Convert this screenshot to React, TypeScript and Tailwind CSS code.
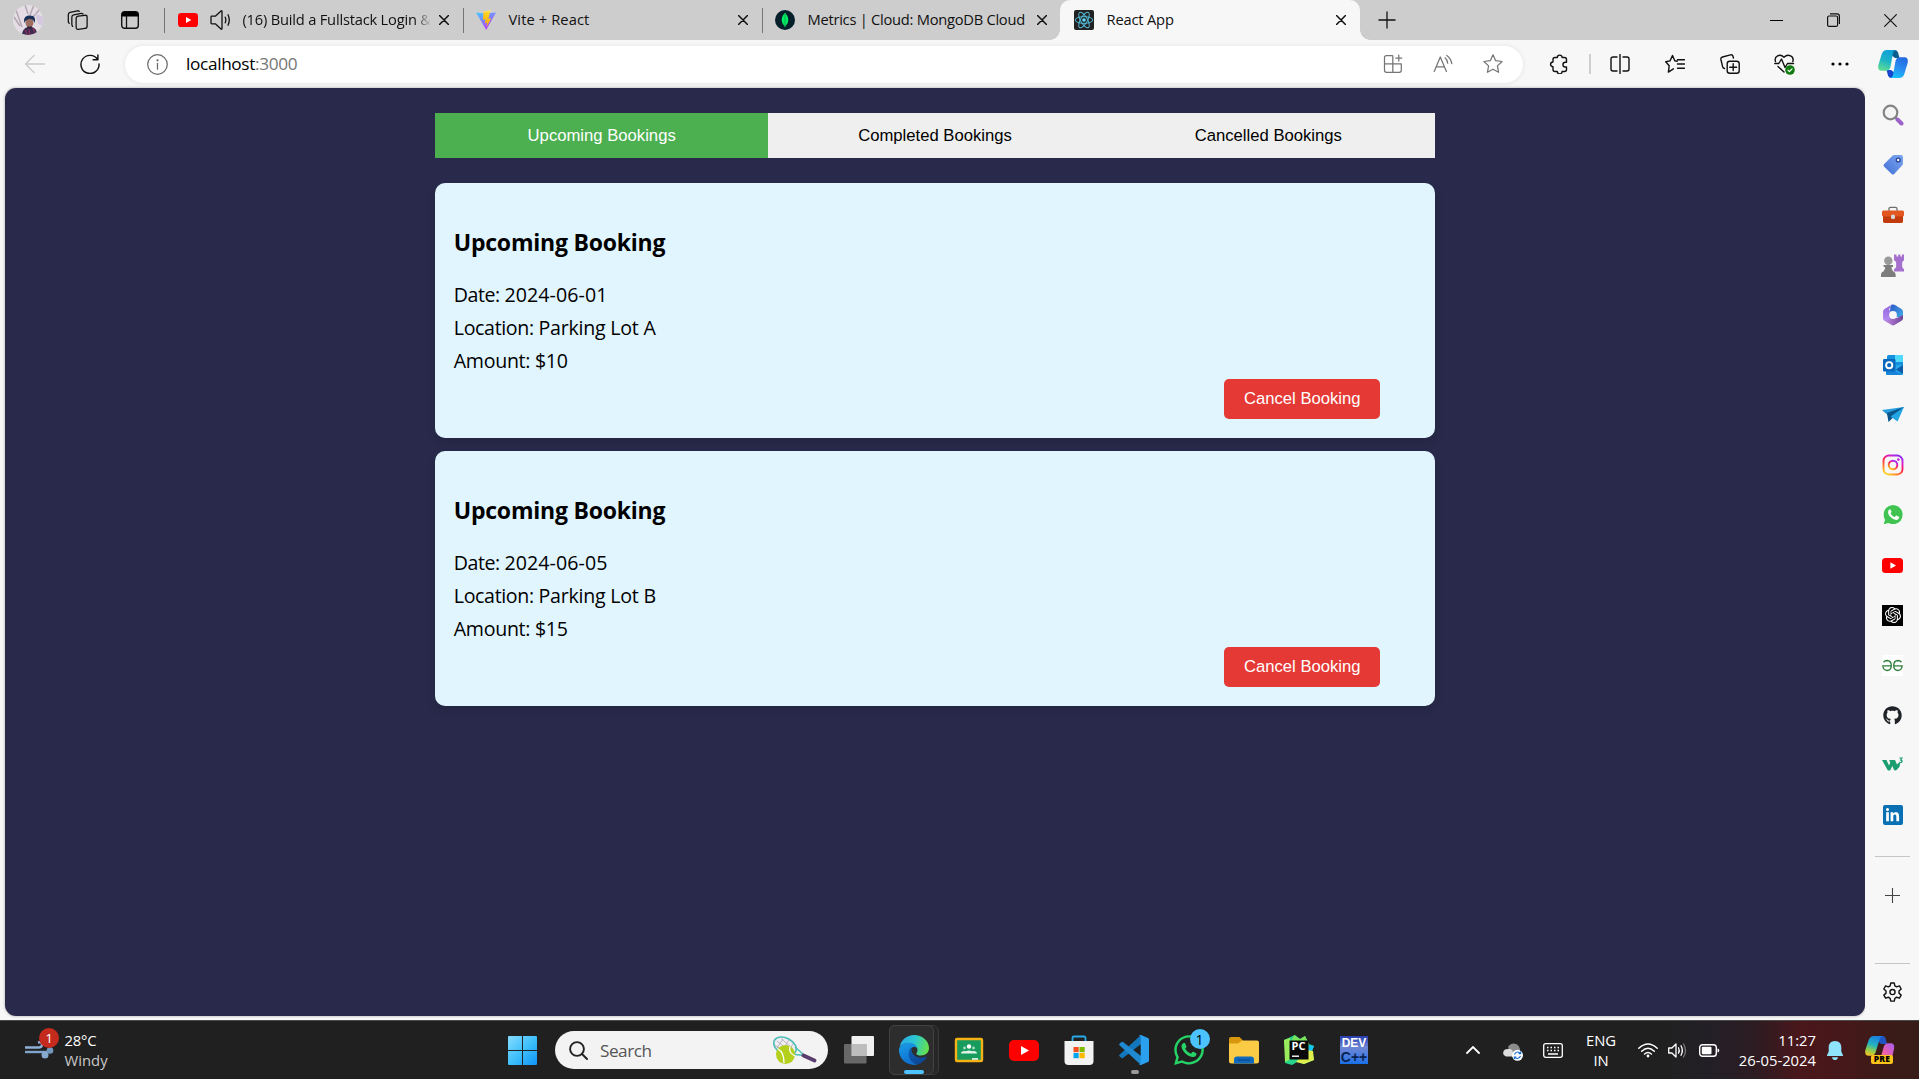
import type { ReactNode } from "react";
import { FaGithub, FaWhatsapp, FaLinkedinIn } from "react-icons/fa";
import { SiOpenai } from "react-icons/si";

/* ---------- shared pieces ---------- */

function Line({ size = 20, children, w = 1.25, color = "#111", className = "" }: { size?: number; children: ReactNode; w?: number; color?: string; className?: string }) {
  return (
    <svg width={size} height={size} viewBox="0 0 20 20" fill="none" stroke={color} strokeWidth={w} strokeLinecap="round" strokeLinejoin="round" className={className}>
      {children}
    </svg>
  );
}

function Close({ size = 10, w = 1.5 }: { size?: number; w?: number }) {
  return (
    <svg width={size} height={size} viewBox="0 0 10 10" stroke="#111" strokeWidth={w} strokeLinecap="round" className="shrink-0">
      <path d="M.5.5l9 9M9.5.5l-9 9" />
    </svg>
  );
}

function YouTube({ width, height }: { width: number; height: number }) {
  return (
    <svg width={width} height={height} viewBox="0 0 30 21" preserveAspectRatio="none" className="shrink-0">
      <rect width="30" height="21" rx="5" fill="#f00" />
      <path d="M12 6l8 4.5-8 4.5z" fill="#fff" />
    </svg>
  );
}

function Divider() {
  return <div className="h-[25px] w-px shrink-0 bg-[#757575]" />;
}

/* ---------- tab strip ---------- */

function Avatar() {
  return (
    <svg width="30" height="30" viewBox="0 0 30 30" className="shrink-0">
      <defs>
        <clipPath id="av"><circle cx="15" cy="15" r="15" /></clipPath>
      </defs>
      <g clipPath="url(#av)">
        <rect width="30" height="30" fill="#e4dde6" />
        <path d="M3 5l6 17M12 0l3 9M17 10L21 0M20 12l7-8M1 12l6 9" stroke="#b3a7b0" strokeWidth="1.5" fill="none" />
        <path d="M22 8l8 4v9l-5-2z" fill="#d3c8dd" />
        <path d="M9 30c0-4 2-7 6-8h4c3 1 5 3 5 8z" fill="#3a2b52" />
        <path d="M12 25l3 5M20 23l2 6M16 24l1 6" stroke="#8d3358" strokeWidth="1.3" />
        <ellipse cx="16.500" cy="17.500" rx="4" ry="5" fill="#9c6f62" />
        <path d="M11.500 18c-1.500-5 1-7.500 5.500-7.500s6 3 4.500 7.500c-.7-3-2-4-4.500-4s-4.500 1-5.500 4z" fill="#1c3158" />
        <path d="M14 21q2.500 1.500 5 0l-1 2.300h-3z" fill="#2b2238" />
      </g>
    </svg>
  );
}

function ViteIcon() {
  return (
    <svg width="20" height="20" viewBox="0 0 20 20" className="shrink-0">
      <defs>
        <linearGradient id="v1" x1="0" y1="0" x2=".6" y2="1"><stop stopColor="#41d1ff" /><stop offset="1" stopColor="#bd34fe" /></linearGradient>
        <linearGradient id="v2" x1="0" y1="0" x2="0" y2="1"><stop stopColor="#ffea83" /><stop offset=".2" stopColor="#ffcf20" /><stop offset="1" stopColor="#ffa800" /></linearGradient>
      </defs>
      <path d="M0 2.400l9 1.200L20 2.400 10.200 20z" fill="url(#v1)" />
      <path d="M14.700 0L7.500 1.500l-.6 8.300 2.800-.6-.9 4 2.300-.6-.6 4.600 4.700-9-2.900.6z" fill="url(#v2)" />
    </svg>
  );
}

function MongoIcon() {
  return (
    <svg width="20" height="20" viewBox="0 0 20 20" className="shrink-0">
      <circle cx="10" cy="10" r="10" fill="#06202b" />
      <path d="M10 2.800c1.200 1.600 3.300 3.600 3.300 7 0 3-1.500 4.800-2.700 5.900l-.3 1.600h-.6l-.3-1.600C8.200 14.600 6.700 12.800 6.700 9.800c0-3.400 2.100-5.400 3.300-7z" fill="#00ed64" />
      <path d="M10 4v12" stroke="#00a34a" strokeWidth=".8" />
    </svg>
  );
}

function ReactIcon() {
  return (
    <svg width="20" height="20" viewBox="0 0 20 20" className="shrink-0">
      <rect width="20" height="20" rx="2" fill="#222" />
      <g fill="none" stroke="#53bcd9" strokeWidth=".95">
        <ellipse cx="10" cy="10" rx="8.800" ry="3.400" />
        <ellipse cx="10" cy="10" rx="8.800" ry="3.400" transform="rotate(60 10 10)" />
        <ellipse cx="10" cy="10" rx="8.800" ry="3.400" transform="rotate(120 10 10)" />
      </g>
      <circle cx="10" cy="10" r="1.800" fill="#61dafb" />
    </svg>
  );
}

function TabStrip() {
  return (
    <div className="flex h-10 shrink-0 items-center bg-[#cdcdcd] text-[14.7px] text-[#111]">
      <div className="flex w-[164px] shrink-0 items-center pl-[13px]">
        <Avatar />
        <Line size={22} className="ml-[24px]" w={1.15}>
          <rect x="8.300" y="6.200" width="10" height="12" rx="2" transform="rotate(0 13 12) skewY(-8) translate(0 1.800)" />
          <path d="M5.200 15.800q-.8-.6-.8-1.600V7.600q0-1.800 1.700-2.200L13 4q1-.1 1.600.7M2 13q-.8-.6-.8-1.500V5.200q0-1.700 1.600-2.100l6.700-1.500q1-.1 1.600.5" />
        </Line>
        <svg width="18" height="18" viewBox="0 0 18 18" fill="none" className="ml-[32px]">
          <rect x=".7" y=".7" width="16.600" height="16.600" rx="2.800" stroke="#111" strokeWidth="1.400" />
          <path d="M1 5V3.500Q1 1 3.500 1h11Q17 1 17 3.500V5z" fill="#000" stroke="#000" />
          <path d="M5.500 5v12" stroke="#111" strokeWidth="1.300" />
        </svg>
      </div>
      <Divider />
      <div className="flex w-[298px] shrink-0 items-center pl-[13px]">
        <YouTube width={20} height={14} />
        <svg width="21" height="20" viewBox="0 0 21 20" fill="none" stroke="#111" strokeWidth="1.300" strokeLinecap="round" strokeLinejoin="round" className="ml-3 shrink-0">
          <path d="M1 7q0-.8.8-.8h3.500L11 1q1-.7 1 .4v17.200q0 1.100-1 .4l-5.700-5.200H1.800Q1 13.800 1 13zM15.200 7.200q1.300 2.800 0 5.600M18 4.800q2.600 5.200 0 10.400" />
        </svg>
        <div className="ml-[11.500px] w-[190px] pb-[2px] tracking-[-0.21px] whitespace-nowrap [mask-image:linear-gradient(to_right,#000_172px,transparent_188px)]">(16) Build a Fullstack Login &amp;</div>
        <div className="ml-[6.500px]"><Close /></div>
      </div>
      <Divider />
      <div className="flex w-[298px] shrink-0 items-center pl-[12px]">
        <ViteIcon />
        <div className="ml-[12.500px] w-[229.500px] pb-[2px] tracking-[0.1px]">Vite + React</div>
        <Close />
      </div>
      <Divider />
      <div className="flex w-[297px] shrink-0 items-center pl-[12px]">
        <MongoIcon />
        <div className="ml-[12.500px] w-[229.500px] pb-[2px] tracking-[-0.26px] whitespace-nowrap">Metrics | Cloud: MongoDB Cloud</div>
        <Close />
      </div>
      <div className="relative flex h-10 w-[300px] shrink-0 items-center rounded-t-[10px] bg-[#f7f7f7] pl-[14px]">
        <div className="absolute bottom-0 -left-[10px] size-[10px] bg-[radial-gradient(circle_at_0_0,#cdcdcd_9.5px,#f7f7f7_10px)]" />
        <div className="absolute -right-[10px] bottom-0 size-[10px] bg-[radial-gradient(circle_at_100%_0,#cdcdcd_9.5px,#f7f7f7_10px)]" />
        <ReactIcon />
        <div className="ml-[12.500px] w-[229.500px] pb-[2px] tracking-[-0.18px]">React App</div>
        <Close />
      </div>
      <svg width="18" height="18" viewBox="0 0 18 18" stroke="#111" strokeWidth="1.300" className="ml-[18px] shrink-0"><path d="M9 .5v17M.5 9h17" /></svg>
      <div className="ml-auto flex">
        <div className="flex w-[57px] items-center justify-center"><div className="h-px w-[13px] bg-black" /></div>
        <div className="flex w-[57px] items-center justify-center">
          <svg width="13" height="14" viewBox="0 0 13 14" fill="none" stroke="#111" strokeWidth="1.200">
            <rect x=".6" y="3" width="10" height="10.400" rx="1.500" />
            <path d="M3 .8h7q2.400 0 2.400 2.400V11" />
          </svg>
        </div>
        <div className="flex w-[57px] items-center justify-center"><Close size={13} w={0.9} /></div>
      </div>
    </div>
  );
}

/* ---------- toolbar ---------- */

function CopilotLogo() {
  return (
    <svg width="30" height="28" viewBox="0 0 30 28">
      <defs>
        <linearGradient id="c1" x1=".6" y1="0" x2=".3" y2="1"><stop stopColor="#0f9fd8" /><stop offset=".5" stopColor="#1cb4c8" /><stop offset="1" stopColor="#5fdc92" /></linearGradient>
        <linearGradient id="c2" x1=".7" y1="0" x2=".3" y2="1"><stop stopColor="#2468e0" /><stop offset=".5" stopColor="#2a8cf0" /><stop offset="1" stopColor="#18c0fa" /></linearGradient>
      </defs>
      <path d="M13 0h4q2.300.2 3 2.600L21.500 8H17l-4-3z" fill="#0a5d8c" />
      <path d="M17 28h-4q-2.300-.2-3-2.600L8.500 20H13l4 3z" fill="#1446d0" />
      <path d="M9 0h8.500q-2 .5-2.500 3l-2.500 14q-.8 3.500-4.300 3.700H3.500C.5 20.700-.3 18 .4 15L3.600 4.300Q5 0 9 0z" fill="url(#c1)" />
      <path d="M21 28h-8.500q2-.5 2.500-3l2.500-14q.8-3.500 4.300-3.700h4.700c3 0 3.800 2.700 3.100 5.700l-3.200 10.700Q25 28 21 28z" fill="url(#c2)" />
    </svg>
  );
}

function Cell({ children }: { children: ReactNode }) {
  return <div className="flex w-[55px] shrink-0 items-center justify-center">{children}</div>;
}

const STAR = "M10 .8l2.700 5.900 6.400.8-4.700 4.400 1.200 6.400L10 15.200l-5.600 3.100 1.200-6.400L.9 7.500l6.400-.8z";

function Toolbar() {
  return (
    <div className="flex h-12 shrink-0 items-center bg-[#f7f7f7]">
      <div className="flex w-[125px] shrink-0 items-center pl-[25px]">
        <Line color="#cbcbcb" w={1.3}><path d="M.5 10h19M9 1.500L.5 10 9 18.500" /></Line>
        <svg width="20" height="20" viewBox="0 0 21 21" fill="none" stroke="#111" strokeWidth="1.500" strokeLinecap="round" strokeLinejoin="round" className="ml-[35px]">
          <path d="M18.500 5.800A9.500 9.500 0 1 0 20 10.500M18.800 1v5h-5" />
        </svg>
      </div>
      <div className="flex h-[37px] w-[1398px] shrink-0 items-center rounded-full bg-white pr-[5.500px] pl-[22px] shadow-[0_0_5px_rgba(0,0,0,0.09)]">
        <Line color="#6b6b6b" w={1.2} size={21}>
          <circle cx="10" cy="10" r="9.300" />
          <path d="M10 9v5.500" />
          <circle cx="10" cy="6" r=".5" fill="#6b6b6b" />
        </Line>
        <div className="ml-[18px] flex pb-px text-[17.2px] tracking-[-0.33px] text-black">
          localhost<span className="text-[#767676]">:3000</span>
        </div>
        <div className="ml-auto flex [&>*]:w-[50px]">
          <div className="flex justify-center">
            <Line color="#757575">
              <path d="M9.500 1.500h-6Q1.500 1.500 1.500 3.500v12.800q0 2 2 2h12.800q2 0 2-2v-6.500H1.500M9.800 1.800v16.500M15.800 1v6M12.800 4h6" />
            </Line>
          </div>
          <div className="flex justify-center">
            <Line color="#757575">
              <path d="M1.200 17.500L7.300 3 13.400 17.500M3.200 12.800h8.200M12 3.800q2.400 2 2.700 5.400M13.800 1.500q4.200 3 5 8.200" />
            </Line>
          </div>
          <div className="flex justify-center"><Line color="#757575"><path d={STAR} /></Line></div>
        </div>
      </div>
      <div className="ml-2 flex shrink-0 items-center">
        <Cell>
          <Line w={1.4}>
            <path d="M4 5.500q0-2 2-2h2.300a2.400 2.400 0 0 1 4.800 0h2.400q2 0 2 2v2.800h-1.200a2.300 2.300 0 0 0 0 4.700h1.200v2.500q0 2-2 2h-2.400a2.400 2.400 0 0 1-4.800 0H6q-2 0-2-2v-2.700a2.400 2.400 0 0 1 0-4.800z" />
          </Line>
        </Cell>
        <div className="ml-[3px] h-5 w-[2px] bg-[#cfcfcf]" />
        <div className="flex pl-px">
          <Cell>
            <Line w={1.4}>
              <path d="M7 3H3Q1 3 1 5v10q0 2 2 2h4M13 3h4q2 0 2 2v10q0 2-2 2h-4M10 .5v19" />
            </Line>
          </Cell>
          <Cell>
            <Line w={1.4}>
              <path d="M12.200 7.200L9.800 6.800 7.500 1.500 5 6.900l-4.300.8 3.500 4-.8 6.400 5-3.300M12.500 5.800h7M12.500 10h7M12.500 14.200h7" />
            </Line>
          </Cell>
          <Cell>
            <Line w={1.4}>
              <rect x="7.200" y="7.200" width="12" height="12" rx="2.500" />
              <path d="M13.200 9.800v6.800M9.800 13.200h6.800M4.500 14.500Q3 14.200 2.600 12.700L.9 5.500q-.4-2 1.500-2.500L10.500.9q2-.4 2.500 1.400l.4 1.700" />
            </Line>
          </Cell>
          <Cell>
            <svg width="21" height="22" viewBox="0 0 21 22" fill="none" stroke="#111" strokeWidth="1.400" strokeLinecap="round" strokeLinejoin="round">
              <path d="M1.500 8.500C-.2 3 6 .2 10 4.200 14 .2 20.500 3 18.800 8.500M.8 10.500h4L7.500 6l3.500 8.500 2.500-4h6M4 13.500l6 5.500" />
              <circle cx="16" cy="17" r="4.800" fill="#107c10" stroke="none" />
              <path d="M14 17.200l1.400 1.400 2.600-2.800" stroke="#fff" strokeWidth="1.200" />
            </svg>
          </Cell>
          <Cell>
            <svg width="18" height="4" viewBox="0 0 18 4"><circle cx="2" cy="2" r="1.600" /><circle cx="9" cy="2" r="1.600" /><circle cx="16" cy="2" r="1.600" /></svg>
          </Cell>
          <div className="flex w-[51px] items-center justify-center"><CopilotLogo /></div>
        </div>
      </div>
    </div>
  );
}

/* ---------- page ---------- */

const bookings = [
  { date: "2024-06-01", location: "Parking Lot A", amount: "$10" },
  { date: "2024-06-05", location: "Parking Lot B", amount: "$15" },
];

function BookingsPage() {
  return (
    <main className="flex flex-1 flex-col items-center rounded-[11px] bg-[#29294b] pt-[25px] shadow-[0_0_3px_rgba(0,0,0,0.35)]">
      <div className="flex w-[1000px] flex-col">
        <div className="grid h-[45px] grid-cols-3 font-['Liberation_Sans',Arial,sans-serif] text-[16.67px] text-black">
          <button className="bg-[#4caf50] text-white">Upcoming Bookings</button>
          <button className="bg-[#efefef]">Completed Bookings</button>
          <button className="bg-[#efefef]">Cancelled Bookings</button>
        </div>
        <div className="mt-[25px] flex flex-col gap-[13px]">
          {bookings.map((b) => (
            <section key={b.date} className="flex h-[255px] flex-col rounded-[10px] bg-[#e1f5fe] px-[18.75px] pt-[42px] text-black shadow-[0_5px_10px_rgba(0,0,0,0.12)]">
              <h3 className="mb-[19px] text-[23px] leading-[34px] font-bold tracking-[-0.22px]">Upcoming Booking</h3>
              <p className="text-[19.6px] leading-[33.2px] tracking-[0.1px]"><span className="tracking-[-0.45px]">Date: </span>{b.date}</p>
              <p className="text-[19.6px] leading-[33.2px] tracking-[-0.24px]"><span className="tracking-[-0.35px]">Location: </span>{b.location}</p>
              <p className="text-[19.6px] leading-[33.2px] tracking-[-0.3px]">Amount: {b.amount}</p>
              <button className="mt-auto mr-[36px] mb-[19px] h-10 w-[156px] shrink-0 self-end rounded-[5px] bg-[#e53935] pb-px font-['Liberation_Sans',Arial,sans-serif] text-[16.67px] text-white">
                Cancel Booking
              </button>
            </section>
          ))}
        </div>
      </div>
    </main>
  );
}

/* ---------- edge sidebar ---------- */

const S = ({ children, size = 22 }: { children: ReactNode; size?: number }) => (
  <svg width={size} height={size} viewBox="0 0 22 22">{children}</svg>
);

const sidebarIcons: ReactNode[] = [
  <S>
    <circle cx="8.500" cy="8.500" r="6.800" fill="#f4f4f4" stroke="#848484" strokeWidth="2.200" />
    <path d="M13.500 13.500l2 2" stroke="#777" strokeWidth="2" />
    <path d="M15.500 15.500l4 4" stroke="#9b63c9" strokeWidth="4" strokeLinecap="round" />
  </S>,
  <S>
    <defs><linearGradient id="tg" x1="1" y1="0" x2="0" y2="1"><stop stopColor="#7fa6ee" /><stop offset="1" stopColor="#4070d8" /></linearGradient></defs>
    <path d="M12.500 1h6.500q2 0 2 2v6.500q0 1-.8 1.800l-8 8.700q-1.200 1.200-2.500 0l-7.500-7.300q-1.500-1.400 0-2.800l8-8Q11.300 1 12.500 1z" fill="url(#tg)" />
    <circle cx="16.200" cy="6" r="1.900" fill="#fff" stroke="#23459b" strokeWidth="1.400" />
  </S>,
  <S>
    <path d="M7 7V4.800Q7 3.300 8.500 3.300h5q1.500 0 1.500 1.500V7" fill="none" stroke="#6f6f6f" strokeWidth="1.300" />
    <rect x="1" y="10" width="20" height="9" rx="1.800" fill="#c23b0c" />
    <rect x="0" y="6.500" width="22" height="6" rx="1.500" fill="#e2571f" />
    <rect x="9" y="10.500" width="4" height="4.500" rx="1.500" fill="#d5d5d5" />
  </S>,
  <S size={23}>
    <path d="M12.500.5h2.300v2h1.700v-2h2v2H20v-2h2V6l-1.700 1.700v5l1.700 2v2h-9.500v-2l2-2v-5L12.500 6z" fill="#a56fcd" />
    <circle cx="7" cy="6.500" r="4" fill="#9a9a9a" />
    <path d="M2.500 10.500h9v2H10q0 2.500 1.500 4 2.500.8 2.500 3V22H0v-2.500q0-2.200 2.500-3Q4 15 4 12.500H2.500z" fill="#7d7d7d" />
  </S>,
  <S>
    <defs>
      <linearGradient id="m1" x1=".5" y1="0" x2=".3" y2="1"><stop stopColor="#8d63e0" /><stop offset="1" stopColor="#b990f0" /></linearGradient>
      <linearGradient id="m2" x1="0" y1="0" x2="1" y2="1"><stop stopColor="#2c55c4" /><stop offset="1" stopColor="#45b4ee" /></linearGradient>
      <linearGradient id="m3" x1="0" y1="0" x2="1" y2="0"><stop stopColor="#c78be6" /><stop offset="1" stopColor="#6d4599" /></linearGradient>
    </defs>
    <path d="M10.500.3L2.500 5Q1 6 1 7.500v7q0 1.500 1.500 2.300l4 2.200 4.500-8L7 5.500Q7.500 2 10.500.3z" fill="url(#m1)" />
    <path d="M9.500.8q1.500-.8 3 0L19.500 5Q21 6 21 7.500V15l-6-2-4-2-3-4Q7.500 3 9.500.8z" fill="url(#m2)" />
    <path d="M2 16l7.500 5q1.500.9 3 0l7-4.200Q21 16 21 14.500V11l-6 3-4-2-4.500 4.500z" fill="url(#m3)" />
    <circle cx="11" cy="11" r="3.900" fill="#f7f7f7" />
  </S>,
  <S>
    <rect x="5" y="1" width="16" height="12" rx="1.500" fill="#1490df" />
    <path d="M13 1h6.500Q21 1 21 2.500V8h-8z" fill="#50d9ff" />
    <path d="M4 12l17-1v8.500q0 1.500-1.500 1.500H5.500Q4 21 4 19.500z" fill="#28a8ea" />
    <path d="M4 12l17 9H5.500Q4 21 4 19.500z" fill="#1784d9" />
    <path d="M21 11v9l-7-4.500z" fill="#0a5ba8" />
    <rect x="1" y="5" width="12.500" height="12.500" rx="1.300" fill="#0a69bd" />
    <circle cx="7.200" cy="11.200" r="3.100" fill="none" stroke="#fff" strokeWidth="1.900" />
  </S>,
  <S>
    <path d="M0 6L22 3 8 13z" fill="#2a9fe0" />
    <path d="M0 6l8 5 14-8L4 9z" fill="#0f6cab" />
    <path d="M5 9.500L22 3 6.500 18z" fill="#0a5489" />
    <path d="M8.500 12.500L22 3l-6.500 14.500z" fill="#23a5e4" />
  </S>,
  <S>
    <defs><linearGradient id="ig" x1=".2" y1="1" x2=".8" y2="0"><stop stopColor="#ffd521" /><stop offset=".3" stopColor="#ff6a2b" /><stop offset=".55" stopColor="#fb1b5e" /><stop offset=".8" stopColor="#d41fd0" /><stop offset="1" stopColor="#8a2cf5" /></linearGradient></defs>
    <g fill="none" stroke="url(#ig)" strokeWidth="1.900">
      <rect x="1.500" y="1.500" width="19" height="19" rx="5.300" />
      <circle cx="11" cy="11" r="4.300" />
    </g>
    <circle cx="16.400" cy="5.600" r="1.300" fill="#c41fd8" />
  </S>,
  <S>
    <path d="M1 21l1.500-5.300A10 10 0 1 1 6.500 19.500z" fill="#40c351" stroke="#fff" strokeWidth="1" />
    <path d="M7.400 5.500q.9-.4 1.300.4l.8 1.900q.1.500-.7 1.400-.3.400 0 .8 1.300 2.100 3.400 3 .5.200.8-.2l.9-1q.4-.4.9-.1l2 1q.5.300.4.8-.4 2.200-2.700 2.400-3 0-5.700-2.600Q6 10.500 6 8.200q.1-1.800 1.400-2.700z" fill="#fff" />
  </S>,
  <YouTube width={21} height={15} />,
  <div className="flex size-[21px] items-center justify-center bg-black text-white"><SiOpenai size={16} /></div>,
  <svg width="21" height="21" viewBox="0 0 21 21" fill="none" stroke="#2f7d3b" strokeWidth="1.300">
    <rect width="21" height="21" fill="#fff" stroke="none" />
    <path d="M1.500 7.200Q3 5.500 5 5.500q4.300.2 4.300 5T5 15.500q-3.800-.3-4.200-4.700h8.500M19.500 7.200Q18 5.500 16 5.500q-4.300.2-4.300 5t4.300 5q3.800-.3 4.200-4.700h-8.500" />
  </svg>,
  <FaGithub size={19} color="#1f2328" />,
  <svg width="21" height="16" viewBox="0 0 21 16" fill="#1a9e70">
    <path d="M0 3h4.500L7 8.500 8.200 5.800 7.200 3H13l2 4.500 2-2 1.200 1-.8 3.500-3.200 3.300q-1.500.7-2.400-.8L10.300 9 8.400 13q-1.400 1.200-2.800 0z" />
    <path d="M17.300 1h2.700l-1.400 2q1.600.2 1.400 1.500-.4 1.500-2.800.8" fill="none" stroke="#1a9e70" strokeWidth="1.200" />
  </svg>,
  <div className="flex size-[20px] items-center justify-center rounded-[2px] bg-[#0a70b4] text-white"><FaLinkedinIn size={15} /></div>,
];

function Sidebar() {
  return (
    <aside className="flex w-[54px] shrink-0 flex-col items-center bg-[#f7f7f7] pt-[2px]">
      {sidebarIcons.map((icon, i) => (
        <div key={i} className="flex h-[50.03px] w-full shrink-0 items-center justify-center pl-px">{icon}</div>
      ))}
      <div className="mt-[15.500px] h-px w-[35px] shrink-0 bg-[#c6c6c6]" />
      <svg width="15" height="15" viewBox="0 0 15 15" stroke="#444" strokeWidth="1.100" className="mt-[31px] shrink-0"><path d="M7.500 0v15M0 7.500h15" /></svg>
      <div className="mt-[60.500px] h-px w-[35px] shrink-0 bg-[#c6c6c6]" />
      <svg width="21" height="21" viewBox="0 0 24 24" fill="none" stroke="#111" strokeWidth="1.600" strokeLinejoin="round" className="mt-[17.500px] shrink-0">
        <path d="M10 1.200h4l.7 3.300 2 1.100 3.200-1.100 2 3.500-2.500 2.300v2.400l2.500 2.300-2 3.500-3.200-1.100-2 1.200-.7 3.200h-4l-.7-3.200-2-1.200-3.200 1.100-2-3.500 2.500-2.300v-2.400L2.100 8l2-3.500 3.200 1.100 2-1.100z" />
        <circle cx="12" cy="11.500" r="2.900" />
      </svg>
    </aside>
  );
}

/* ---------- taskbar ---------- */

function EdgeLogo() {
  return (
    <svg width="30" height="30" viewBox="0 0 30 30">
      <defs>
        <linearGradient id="e1" x1="0" y1=".3" x2="1" y2=".5"><stop stopColor="#2aa9e8" /><stop offset=".5" stopColor="#2cc6cf" /><stop offset="1" stopColor="#66e24a" /></linearGradient>
        <linearGradient id="e2" x1="0" y1="0" x2=".4" y2="1"><stop stopColor="#1a9de6" /><stop offset="1" stopColor="#0f6fd0" /></linearGradient>
        <linearGradient id="e3" x1="0" y1="0" x2="1" y2="1"><stop stopColor="#0f5fb8" /><stop offset="1" stopColor="#0b418c" /></linearGradient>
      </defs>
      <path d="M.6 11.500C2 5 8 0 15 0c8.500 0 15 6 15 13 0 4.600-3.500 7.500-7.800 7.500-3.500 0-5.500-1.300-4.600-2.600 1.300-1.600 1.400-4.200-.6-6.300C12.500 7 5 7.500.6 11.500z" fill="url(#e1)" />
      <path d="M.1 13.500C1.500 9.500 6 7.200 10.500 7.700c4 .3 7 2.500 7.500 5-4-2-8 1-8 6 0 6 4 10 9 10.500-2 .8-4.500.9-7 .4C4.500 28 -.8 21.500.1 13.500z" fill="url(#e2)" />
      <path d="M13 12.800C10 15 9 19 10.500 22.500c1.800 4.500 5.500 7 9 6.700 3.500-1.200 6.300-3.600 8-6.700.3-.7-.2-1-.8-.8-4.200 1.900-10.500 1.100-13-3.200-1.200-2-1.400-4-.7-5.700z" fill="url(#e3)" />
    </svg>
  );
}

function Racket() {
  return (
    <svg width="44" height="28" viewBox="0 0 44 28">
      <ellipse cx="12" cy="10" rx="12" ry="8" transform="rotate(28 12 10)" fill="#f0eef2" stroke="#4dbdb5" strokeWidth="1.600" />
      <path d="M4 5l14 11M8 2.500L20 13M2 9l10 7M4 12l6-9M9 15l7-11M14 17l6-9" stroke="#9a8fa5" strokeWidth=".6" />
      <path d="M22 11l9 8M18 18l13 1.500" stroke="#4dbdb5" strokeWidth="1.500" />
      <path d="M30.500 19.500l11 5" stroke="#5a3d6e" strokeWidth="3.800" strokeLinecap="round" />
      <circle cx="12.500" cy="18.500" r="9.500" fill="#b4cf1c" />
      <path d="M5 13q6 3 6 14M17 10.500q-2 6 5 9.500" stroke="#fff" strokeWidth="1.300" fill="none" />
    </svg>
  );
}

const T = ({ children, size = 30 }: { children: ReactNode; size?: number }) => (
  <svg width={size} height={size} viewBox="0 0 30 30">{children}</svg>
);

function TaskbarApps() {
  const cell = "relative flex h-full w-[55px] shrink-0 items-center justify-center";
  return (
    <>
      <div className={cell}>
        <T>
          <rect x="7.500" y="1" width="22.500" height="20" rx="1" fill="#f0f0f0" />
          <rect y="9" width="22.500" height="19.500" rx="1" fill="#7a7a7a" fillOpacity=".8" />
          <rect x="7.500" y="9" width="15" height="12" fill="#bdbdbd" />
        </T>
      </div>
      <div className={cell}>
        <div className="absolute top-[4px] left-[2px] h-[50px] w-[50px] rounded-[6px] border border-[#3a3a3a] bg-[#262626]" />
        <div className="absolute top-[4px] left-[2px] h-[50px] w-[45px] rounded-[6px] border border-[#424242] bg-[#2d2d2d]" />
        <div className="relative"><EdgeLogo /></div>
        <div className="absolute bottom-[5px] left-[17px] h-1 w-5 rounded-full bg-[#4cc2ff]" />
      </div>
      <div className={cell}>
        <T>
          <rect x="2" y="4" width="26" height="22" rx="1" fill="#189c5d" stroke="#f4b217" strokeWidth="2.400" />
          <circle cx="15" cy="11.500" r="2.200" fill="#fff" />
          <circle cx="10.500" cy="13" r="1.400" fill="#a5dcc2" /><circle cx="19.500" cy="13" r="1.400" fill="#a5dcc2" />
          <path d="M7 18.500q0-2.500 3.500-2.500 1 0 1.500.3 3-1.500 6 0 .5-.3 1.500-.3 3.500 0 3.500 2.500z" fill="#dff3ea" />
          <rect x="18" y="23.200" width="6" height="1.500" fill="#fff" />
        </T>
      </div>
      <div className={cell}><YouTube width={30} height={21} /></div>
      <div className={cell}>
        <T>
          <path d="M8.500 7V3.200Q8.500 1.500 10 1.500h10q1.500 0 1.500 1.700V7" fill="none" stroke="#27a9e8" strokeWidth="1.800" />
          <path d="M.5 6h29v20q0 4-4 4h-21q-4 0-4-4z" fill="#f2f2f2" />
          <rect x="9.500" y="12" width="5.200" height="5.200" fill="#f25022" /><rect x="15.500" y="12" width="5.200" height="5.200" fill="#7fba00" />
          <rect x="9.500" y="18" width="5.200" height="5.200" fill="#00a4ef" /><rect x="15.500" y="18" width="5.200" height="5.200" fill="#ffb900" />
        </T>
      </div>
      <div className={cell}>
        <T>
          <path d="M22 0v9L4 23q-.8.600-1.500 0L.5 21.300q-.8-.8 0-1.500z" fill="#1277bd" />
          <path d="M22 30v-9L4 7q-.8-.6-1.500 0L.5 8.700q-.8.800 0 1.500z" fill="#1f8ad2" />
          <path d="M22 0l7 3q1 .5 1 1.500v21q0 1-1 1.500l-7 3q-1.300.3-2-.8 1.500.5 1.700-1.200V2q0-1.500-1.700-1.200.7-1.100 2-.8z" fill="#2ba0ee" />
        </T>
        <div className="absolute bottom-[5px] left-[24px] h-1 w-2 rounded-full bg-[#9a9a9a]" />
      </div>
      <div className={cell}>
        <FaWhatsapp size={34} color="#25d366" />
        <div className="absolute top-[8px] left-[28px] flex size-5 items-center justify-center rounded-full bg-[#4cc2ff] text-[14px] text-black">1</div>
      </div>
      <div className={cell}>
        <T>
          <path d="M0 4q0-2 2-2h8.500l3.500 3.500-4 5H0z" fill="#d9970f" />
          <path d="M0 8.500h9l4-3h15q2 0 2 2V26q0 2.500-2.500 2.500h-25Q0 28.500 0 26z" fill="#fccb45" />
          <path d="M5 28.500v-4q0-3 3-3h14q3 0 3 3v4z" fill="#1069bf" />
          <path d="M8.500 25h13" stroke="#0a4a8a" strokeWidth="1.200" />
        </T>
      </div>
      <div className={cell}>
        <T>
          <path d="M0 5l11-5 5 4 5-3 4 8 5 2-2 5 2 9-10 4-7-2-5 3-7-2 1-6z" fill="#27d58c" />
          <path d="M10 0l6 4 5-3 4 8-6 4L7 8z" fill="#7be35a" />
          <path d="M25 10l5 1-2 5-5 2z" fill="#16c5f0" />
          <path d="M23 15l6 1 1 9-10 4-8-2z" fill="#dff04e" />
          <path d="M0 5l6-2 3 20-8 4z" fill="#9aec5c" />
          <rect x="5.500" y="5.500" width="19" height="19" fill="#0a0a0a" />
          <rect x="8" y="20.500" width="7" height="1.400" fill="#fff" />
        </T>
        <span className="absolute top-[19px] left-[20px] text-[11px] leading-[12px] font-bold text-white">PC</span>
      </div>
      <div className={cell}>
        <div className="flex h-[28px] w-[28px] flex-col items-center bg-linear-to-b from-[#2a3bb0] via-[#6f86d4] via-40% to-[#1170e8] font-['Liberation_Sans',sans-serif] font-bold">
          <span className="h-[14px] text-[12px] leading-[14px] text-white">DEV</span>
          <span className="h-[14px] text-[14px] leading-[15px] text-[#0a2350]">C++</span>
        </div>
      </div>
    </>
  );
}

function Tray() {
  return (
    <div className="ml-auto flex h-full items-center text-[14.8px] leading-5 text-white">
      <div className="flex w-10 justify-center">
        <svg width="14" height="8" viewBox="0 0 14 8" fill="none" stroke="#fff" strokeWidth="1.800" strokeLinecap="round"><path d="M1 7l6-6 6 6" /></svg>
      </div>
      <div className="flex w-10 justify-center pt-1">
        <svg width="20" height="18" viewBox="0 0 20 18">
          <path d="M5 4q3-5 8-3 4 1.500 4 7l-8 4z" fill="#8c8c8c" />
          <path d="M3 13.500Q-.5 12.500.3 9 1 6 4.500 6q3-1 5 1.500l1 6z" fill="#dcdcdc" />
          <circle cx="14.500" cy="12.300" r="5.500" fill="#fff" />
          <path d="M11.500 11.500q1-2.700 3.500-2.500 1.500.2 2.300 1.500M17.500 13q-1 2.700-3.500 2.500-1.500-.2-2.300-1.500M17.600 8.500v2.200h-2M11.400 16.200V14h2" fill="none" stroke="#1a6fd0" strokeWidth="1.200" />
        </svg>
      </div>
      <div className="flex w-10 justify-center">
        <svg width="20" height="15" viewBox="0 0 20 15" fill="none" stroke="#fff" strokeWidth="1.300">
          <rect x=".7" y=".7" width="18.600" height="13.600" rx="2" />
          <path d="M4 4.500h1.500M7.500 4.500H9M11 4.500h1.500M14.500 4.500H16M4 7.500h1.500M7.500 7.500H9M11 7.500h1.500M14.500 7.500H16M5 11h10" />
        </svg>
      </div>
      <div className="w-14 pb-px text-center tracking-[-0.1px]">ENG<br />IN</div>
      <div className="ml-1 flex w-[30px] justify-center">
        <svg width="20" height="15" viewBox="0 0 20 15" fill="none" stroke="#fff" strokeWidth="1.500" strokeLinecap="round">
          <path d="M.8 5.300q9.200-8.600 18.400 0M3.700 8.200q6.300-5.800 12.600 0M6.600 11q3.400-3 6.800 0" />
          <circle cx="10" cy="13" r="1.400" fill="#fff" stroke="none" />
        </svg>
      </div>
      <div className="flex w-[29px] justify-center">
        <svg width="19" height="17" viewBox="0 0 19 17" fill="none" stroke="#fff" strokeWidth="1.300" strokeLinecap="round" strokeLinejoin="round">
          <path d="M.7 6h3.200L8 2v13l-4.100-4H.7zM10.500 5.800q1.500 2.700 0 5.400M13 3.800q2.700 4.700 0 9.400" />
          <path d="M15.500 2q4 6.500 0 13" stroke="#777" />
        </svg>
      </div>
      <div className="ml-0.5 flex w-[31px] justify-center">
        <svg width="21" height="13" viewBox="0 0 21 13" fill="none">
          <rect x=".7" y=".7" width="16.600" height="11.600" rx="2.800" stroke="#fff" strokeWidth="1.400" />
          <rect x="2.800" y="2.800" width="9.700" height="7.400" rx="1" fill="#fff" />
          <path d="M18.500 4.500q1.800.2 1.800 2t-1.800 2z" fill="#fff" />
        </svg>
      </div>
      <div className="w-[91px] pb-px text-right">11:27<br />26-05-2024</div>
      <div className="flex w-[38px] justify-center">
        <svg width="16" height="19" viewBox="0 0 16 19" fill="#8fe3fb">
          <path d="M8 0c4 0 6.300 2.800 6.300 6.300v4.200L16 14.200q.2.800-.7.800H.7q-.9 0-.7-.8l1.700-3.700V6.300C1.700 2.800 4 0 8 0zM5 16.200h6Q10.500 19 8 19t-3-2.800z" />
        </svg>
      </div>
      <div className="relative flex w-[51px] justify-center">
        <svg width="30" height="29" viewBox="0 0 30 29">
          <defs>
            <linearGradient id="p1" x1=".6" y1="0" x2=".3" y2="1"><stop stopColor="#1b7fe0" /><stop offset=".45" stopColor="#22b3c0" /><stop offset=".75" stopColor="#8fcf4a" /><stop offset="1" stopColor="#f2c02a" /></linearGradient>
            <linearGradient id="p2" x1="1" y1="0" x2="0" y2="1"><stop stopColor="#a45df0" /><stop offset=".5" stopColor="#ea5fb0" /><stop offset="1" stopColor="#ff8a5c" /></linearGradient>
          </defs>
          <path d="M15 0h3q2 .3 2.600 2.600L22 8h-6l-3-3z" fill="#1f54c4" />
          <path d="M9 0h8.500q-2 .3-2.800 3l-4 13q-1 3.700-4.500 3.700H3.500C.5 19.700-.3 17 .4 14L3.600 4.300Q5 0 9 0z" fill="url(#p1)" />
          <path d="M21 26h-8.500q2-.3 2.800-3l3.400-12q1-3.700 4.500-3.700h2.700c3 0 3.800 2.700 3.100 5.700l-2 9z" fill="url(#p2)" />
        </svg>
        <span className="absolute top-[19px] left-[17px] flex h-[9.500px] w-[22px] items-center justify-center rounded-[2px] bg-[#fcc419] text-[8.5px] leading-none font-extrabold tracking-[0.3px] text-black">PRE</span>
      </div>
    </div>
  );
}

function Taskbar() {
  return (
    <footer className="flex h-[59px] shrink-0 items-center border-t border-[#4a4a4a] bg-[#202020] bg-[linear-gradient(90deg,transparent_1660px,#231f26_1710px,#2c1c22_1755px,#4a171b_1800px,#45181a_1850px,#3b1b17_1885px,#381c17_1919px)]">
      <div className="flex w-[494px] shrink-0 items-center pl-[25px]">
        <div className="relative">
          <svg width="30" height="30" viewBox="0 0 30 30" fill="none" stroke="#8fb0d6" strokeWidth="2.400">
            <path d="M0 12.500h14q3.500-.5 3-3.500-.5-2.500-4-1.500" />
            <path d="M0 17h22" stroke="#7fa3cc" />
            <circle cx="25" cy="15.500" r="3.300" fill="#7396bd" stroke="none" />
            <circle cx="20" cy="20" r="3.500" fill="#86a9cf" stroke="none" />
          </svg>
          <div className="absolute -top-[7px] left-[14px] flex size-5 items-center justify-center rounded-full bg-[#c42b1c] text-[13.5px] text-white">1</div>
        </div>
        <div className="ml-[9.500px] pb-px text-[14.8px] leading-5 text-white">
          <div className="tracking-[-0.2px]">28°C</div>
          <div className="tracking-[0.05px] text-[#c9c9c9]">Windy</div>
        </div>
      </div>
      <div className="flex w-[61px] shrink-0 pl-[14px]">
        <svg width="29" height="29" viewBox="0 0 29 29">
          <defs><linearGradient id="w" x1="0" y1="0" x2="29" y2="29" gradientUnits="userSpaceOnUse"><stop stopColor="#86dcff" /><stop offset=".5" stopColor="#3fc0fa" /><stop offset="1" stopColor="#1094f6" /></linearGradient></defs>
          <path d="M0 1q0-1 1-1h13v14H0zM15 0h13q1 0 1 1v13H15zM0 15h14v14H1q-1 0-1-1zM15 15h14v13q0 1-1 1H15z" fill="url(#w)" />
        </svg>
      </div>
      <div className="flex h-[38px] w-[273px] shrink-0 items-center rounded-full bg-[#f3f3f3] pr-[11px] pl-[14px]">
        <svg width="19" height="19" viewBox="0 0 19 19" fill="none" stroke="#222" strokeWidth="1.900" strokeLinecap="round"><circle cx="8" cy="8" r="6.900" /><path d="M13 13l5 5" /></svg>
        <div className="ml-[12px] pt-px text-[17.2px] tracking-[-0.5px] text-[#555]">Search</div>
        <div className="ml-auto"><Racket /></div>
      </div>
      <div className="ml-[3.500px] flex h-full"><TaskbarApps /></div>
      <div className="mr-[14px] ml-auto h-full"><Tray /></div>
    </footer>
  );
}

export default function App() {
  return (
    <div className="flex h-[1079px] w-[1919px] flex-col overflow-hidden bg-[#f7f7f7] font-['Open_Sans','Noto_Sans',sans-serif]">
      <TabStrip />
      <Toolbar />
      <div className="flex min-h-0 flex-1">
        <div className="flex flex-1 pb-[4px] pl-[5px]">
          <BookingsPage />
        </div>
        <Sidebar />
      </div>
      <Taskbar />
    </div>
  );
}
